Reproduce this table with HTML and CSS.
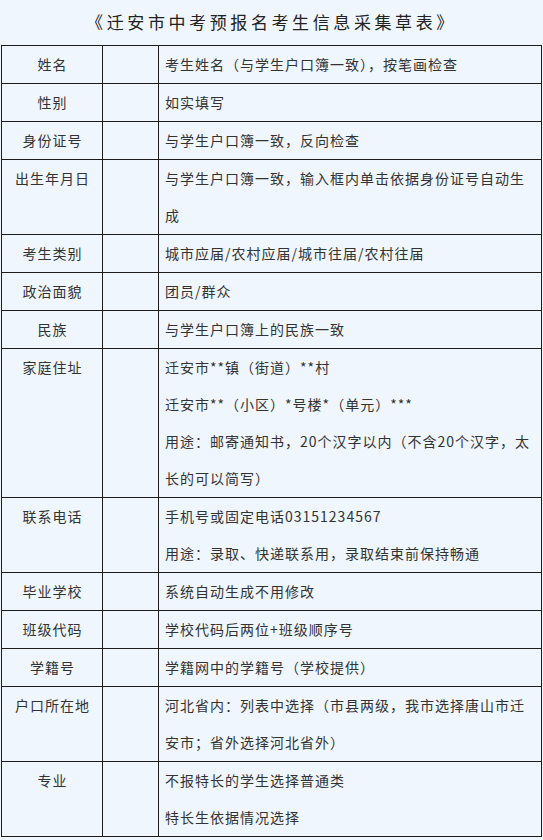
FILE: index.html
```html
<!DOCTYPE html>
<html lang="zh-CN">
<head>
<meta charset="utf-8">
<title>迁安市中考预报名考生信息采集草表</title>
<link rel="stylesheet" href="styles.css">
</head>
<body>
<h1 class="title">《迁安市中考预报名考生信息采集草表》</h1>
<div class="sheet">
  <div class="cell label">姓名</div><div class="cell blank"></div><div class="cell info"><p>考生姓名（与学生户口簿一致），按笔画检查</p></div>
  <div class="cell label">性别</div><div class="cell blank"></div><div class="cell info"><p>如实填写</p></div>
  <div class="cell label">身份证号</div><div class="cell blank"></div><div class="cell info"><p>与学生户口簿一致，反向检查</p></div>
  <div class="cell label">出生年月日</div><div class="cell blank"></div><div class="cell info"><p>与学生户口簿一致，输入框内单击依据身份证号自动生成</p></div>
  <div class="cell label">考生类别</div><div class="cell blank"></div><div class="cell info"><p>城市应届/农村应届/城市往届/农村往届</p></div>
  <div class="cell label">政治面貌</div><div class="cell blank"></div><div class="cell info"><p>团员/群众</p></div>
  <div class="cell label">民族</div><div class="cell blank"></div><div class="cell info"><p>与学生户口簿上的民族一致</p></div>
  <div class="cell label">家庭住址</div><div class="cell blank"></div><div class="cell info"><p>迁安市**镇（街道）**村</p><p>迁安市**（小区）*号楼*（单元）***</p><p>用途：邮寄通知书，20个汉字以内（不含20个汉字，太长的可以简写）</p></div>
  <div class="cell label">联系电话</div><div class="cell blank"></div><div class="cell info"><p>手机号或固定电话03151234567</p><p>用途：录取、快递联系用，录取结束前保持畅通</p></div>
  <div class="cell label">毕业学校</div><div class="cell blank"></div><div class="cell info"><p>系统自动生成不用修改</p></div>
  <div class="cell label">班级代码</div><div class="cell blank"></div><div class="cell info"><p>学校代码后两位+班级顺序号</p></div>
  <div class="cell label">学籍号</div><div class="cell blank"></div><div class="cell info"><p>学籍网中的学籍号（学校提供）</p></div>
  <div class="cell label">户口所在地</div><div class="cell blank"></div><div class="cell info"><p>河北省内：列表中选择（市县两级，我市选择唐山市迁安市；省外选择河北省外）</p></div>
  <div class="cell label">专业</div><div class="cell blank"></div><div class="cell info"><p>不报特长的学生选择普通类</p><p>特长生依据情况选择</p></div>
</div>
</body>
</html>
```
FILE: styles.css
```css
html, body {
  margin: 0;
  padding: 0;
  background: #eff6fd;
}

body {
  font-family: "Noto Sans CJK SC", "Noto Sans", sans-serif;
  color: #333;
}

.title {
  margin: 0;
  height: 45px;
  line-height: 43px;
  font-size: 17px;
  font-weight: normal;
  letter-spacing: 3.6px;
  text-align: center;
  color: #222;
}

.sheet {
  display: grid;
  grid-template-columns: 101px 56px 383px;
  margin-left: 1px;
  width: 541px;
  border-left: 1px solid #1c1c1c;
  border-top: 1px solid #1c1c1c;
  box-sizing: border-box;
}

.cell {
  border-right: 1px solid #1c1c1c;
  border-bottom: 1px solid #1c1c1c;
  font-size: 14px;
  letter-spacing: 1px;
  line-height: 37px;
  min-height: 37px;
}

.label {
  text-align: center;
  padding-left: 1px;
}

.info {
  padding: 0 8px 0 6px;
}

.info p {
  margin: 0;
}
```
